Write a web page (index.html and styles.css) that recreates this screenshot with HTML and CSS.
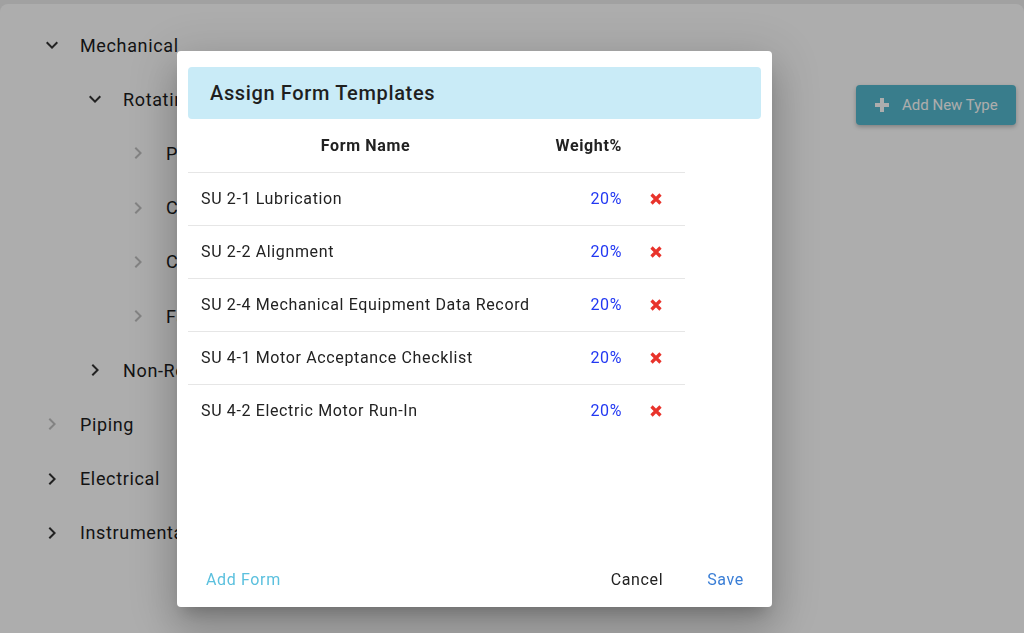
FILE: index.html
```html
<!DOCTYPE html>
<html lang="en">
<head>
    <meta charset="UTF-8">
    <meta name="viewport" content="width=device-width, initial-scale=1.0">
    <title>Assign Form Templates</title>
    <link rel="stylesheet" href="styles.css">
</head>
<body>
    <div class="card">
        <ul class="tree">
            <li>
                <div class="node">
                    <svg class="chev" viewBox="0 0 24 24"><path d="M16.59 8.59L12 13.17 7.41 8.59 6 10l6 6 6-6z"/></svg>
                    <span>Mechanical</span>
                </div>
                <ul>
                    <li>
                        <div class="node">
                            <svg class="chev" viewBox="0 0 24 24"><path d="M16.59 8.59L12 13.17 7.41 8.59 6 10l6 6 6-6z"/></svg>
                            <span>Rotating</span>
                        </div>
                        <ul>
                            <li><div class="node leaf"><svg class="chev" viewBox="0 0 24 24"><path d="M10 6L8.59 7.41 13.17 12l-4.58 4.59L10 18l6-6z"/></svg><span>Pumps</span></div></li>
                            <li><div class="node leaf"><svg class="chev" viewBox="0 0 24 24"><path d="M10 6L8.59 7.41 13.17 12l-4.58 4.59L10 18l6-6z"/></svg><span>Compressors</span></div></li>
                            <li><div class="node leaf"><svg class="chev" viewBox="0 0 24 24"><path d="M10 6L8.59 7.41 13.17 12l-4.58 4.59L10 18l6-6z"/></svg><span>Conveyors</span></div></li>
                            <li><div class="node leaf"><svg class="chev" viewBox="0 0 24 24"><path d="M10 6L8.59 7.41 13.17 12l-4.58 4.59L10 18l6-6z"/></svg><span>Fans</span></div></li>
                        </ul>
                    </li>
                    <li>
                        <div class="node">
                            <svg class="chev" viewBox="0 0 24 24"><path d="M10 6L8.59 7.41 13.17 12l-4.58 4.59L10 18l6-6z"/></svg>
                            <span>Non-Rotating</span>
                        </div>
                    </li>
                </ul>
            </li>
            <li><div class="node leaf"><svg class="chev" viewBox="0 0 24 24"><path d="M10 6L8.59 7.41 13.17 12l-4.58 4.59L10 18l6-6z"/></svg><span>Piping</span></div></li>
            <li><div class="node"><svg class="chev" viewBox="0 0 24 24"><path d="M10 6L8.59 7.41 13.17 12l-4.58 4.59L10 18l6-6z"/></svg><span>Electrical</span></div></li>
            <li><div class="node"><svg class="chev" viewBox="0 0 24 24"><path d="M10 6L8.59 7.41 13.17 12l-4.58 4.59L10 18l6-6z"/></svg><span>Instrumentation</span></div></li>
        </ul>

        <button class="add-type">
            <svg class="plus" viewBox="0 0 16 16"><path d="M6 1h4v5h5v4h-5v5H6v-5H1V6h5z"/></svg>
            Add New Type
        </button>
    </div>

    <div class="backdrop"></div>

    <div class="dialog">
        <h2 class="dialog-title">Assign Form Templates</h2>

        <div class="dialog-body">
            <table class="forms">
                <thead>
                    <tr>
                        <th class="col-name">Form Name</th>
                        <th class="col-weight">Weight%</th>
                        <th class="col-del"></th>
                    </tr>
                </thead>
                <tbody>
                    <tr>
                        <td class="col-name">SU 2-1 Lubrication</td>
                        <td class="col-weight">20%</td>
                        <td class="col-del"><svg class="del" viewBox="0 0 12 12"><path d="M1.5 1.5l9 9M10.5 1.5l-9 9"/></svg></td>
                    </tr>
                    <tr>
                        <td class="col-name">SU 2-2 Alignment</td>
                        <td class="col-weight">20%</td>
                        <td class="col-del"><svg class="del" viewBox="0 0 12 12"><path d="M1.5 1.5l9 9M10.5 1.5l-9 9"/></svg></td>
                    </tr>
                    <tr>
                        <td class="col-name">SU 2-4 Mechanical Equipment Data Record</td>
                        <td class="col-weight">20%</td>
                        <td class="col-del"><svg class="del" viewBox="0 0 12 12"><path d="M1.5 1.5l9 9M10.5 1.5l-9 9"/></svg></td>
                    </tr>
                    <tr>
                        <td class="col-name">SU 4-1 Motor Acceptance Checklist</td>
                        <td class="col-weight">20%</td>
                        <td class="col-del"><svg class="del" viewBox="0 0 12 12"><path d="M1.5 1.5l9 9M10.5 1.5l-9 9"/></svg></td>
                    </tr>
                    <tr>
                        <td class="col-name">SU 4-2 Electric Motor Run-In</td>
                        <td class="col-weight">20%</td>
                        <td class="col-del"><svg class="del" viewBox="0 0 12 12"><path d="M1.5 1.5l9 9M10.5 1.5l-9 9"/></svg></td>
                    </tr>
                </tbody>
            </table>
        </div>

        <div class="dialog-actions">
            <a href="#" class="btn-text info">Add Form</a>
            <div class="spacer"></div>
            <a href="#" class="btn-text plain">Cancel</a>
            <a href="#" class="btn-text primary">Save</a>
        </div>
    </div>
</body>
</html>
```

FILE: styles.css
```css
* {
    margin: 0;
    padding: 0;
    box-sizing: border-box;
}

body {
    font-family: Roboto, "Liberation Sans", Arial, sans-serif;
    background-color: #eeeeee;
    color: #1c1c1c;
    height: 633px;
    overflow: hidden;
    padding-top: 4px;
    letter-spacing: 0.04em;
}

.card {
    background-color: #ffffff;
    border-radius: 8px 8px 0 0;
    height: 629px;
    padding: 14px 8px 0 0;
    display: flex;
    align-items: flex-start;
}

/* Tree */
.tree {
    flex: 1;
    list-style: none;
}

.tree ul {
    list-style: none;
    padding-left: 43px;
}

.node {
    height: 54.2px;
    display: flex;
    align-items: center;
    font-size: 18px;
    padding-left: 40px;
}

.chev {
    width: 24px;
    height: 24px;
    fill: #333;
    margin-right: 16px;
    flex-shrink: 0;
}

.leaf .chev {
    fill: #c2c2c2;
}

.add-type {
    margin-top: 67px;
    width: 160px;
    height: 40px;
    border: none;
    border-radius: 4px;
    background-color: #55b9ce;
    color: #ffffff;
    font-family: Roboto, "Liberation Sans", Arial, sans-serif;
    font-size: 15px;
    letter-spacing: 0;
    display: flex;
    align-items: center;
    padding-left: 18px;
    box-shadow: 0 2px 4px rgba(0, 0, 0, 0.25);
}

.plus {
    width: 16px;
    height: 16px;
    fill: #ffffff;
    margin-right: 12px;
}

/* Backdrop + dialog */
.backdrop {
    position: fixed;
    inset: 0;
    background-color: rgba(0, 0, 0, 0.32);
}

.dialog {
    position: absolute;
    left: 177px;
    top: 51px;
    width: 595px;
    height: 556px;
    background-color: #ffffff;
    border-radius: 4px;
    padding: 16px 11px 0;
    display: flex;
    flex-direction: column;
    box-shadow: 0 11px 15px -7px rgba(0, 0, 0, 0.2),
                0 24px 38px 3px rgba(0, 0, 0, 0.14),
                0 9px 46px 8px rgba(0, 0, 0, 0.12);
}

.dialog-title {
    height: 52px;
    background-color: #c9ebf7;
    border-radius: 4px;
    font-size: 20px;
    font-weight: 500;
    color: #1f1f1f;
    display: flex;
    align-items: center;
    padding-left: 22px;
}

.dialog-body {
    flex: 1;
}

.forms {
    width: 497px;
    border-collapse: collapse;
    font-size: 16px;
}

.forms th,
.forms td {
    height: 53px;
    padding: 0;
}

.forms th {
    font-weight: 700;
    color: #222;
    border-bottom: 1px solid #e6e6e6;
}

.forms tbody tr:not(:last-child) td {
    border-bottom: 1px solid #e6e6e6;
}

.col-name {
    width: 355px;
    text-align: left;
    color: #222;
}

td.col-name {
    padding-left: 13px;
}

.forms th.col-name {
    text-align: center;
}

.forms .col-weight {
    width: 90px;
    text-align: right;
    padding-right: 11px;
}

td.col-weight {
    color: #2238f2;
}

.forms .col-del {
    width: 52px;
    padding-left: 17px;
}

.del {
    width: 12px;
    height: 12px;
    display: block;
    stroke: #e8332b;
    stroke-width: 3.2;
}

.dialog-actions {
    height: 56px;
    display: flex;
    align-items: center;
    padding: 0 17px 0 18px;
    gap: 44px;
}

.spacer {
    flex: 1;
}

.btn-text {
    font-size: 16px;
    text-decoration: none;
}

.btn-text.info {
    color: #5bc0de;
}

.btn-text.plain {
    color: #222;
}

.btn-text.primary {
    color: #3a7ed6;
}
```
